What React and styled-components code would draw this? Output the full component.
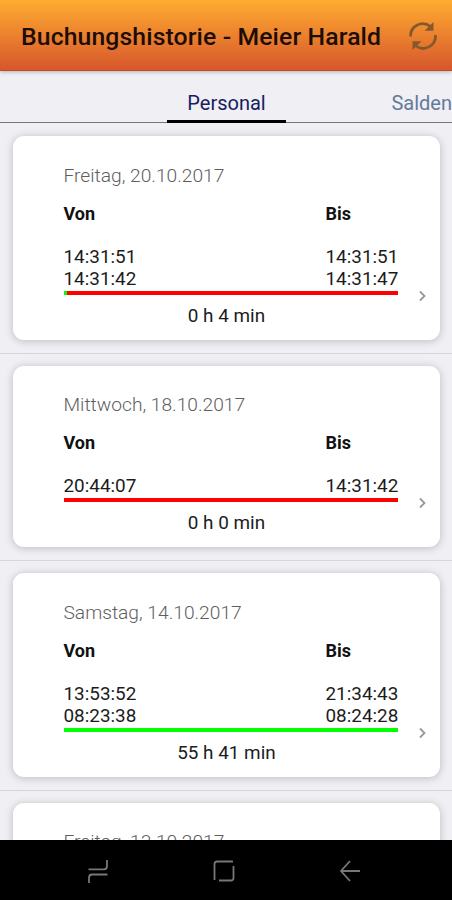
import React from "react";
import { styled, createGlobalStyle } from "styled-components";

const GlobalStyle = createGlobalStyle`
  * {
    box-sizing: border-box;
  }
  body {
    margin: 0;
    background-color: #efeff4;
    font-family: Roboto, "Liberation Sans", sans-serif;
  }
`;
const Screen = styled.div`
  display: flex;
  flex-direction: column;
  width: 452px;
  height: 900px;
  overflow: hidden;
  background-color: #efeff4;
`;
const Header = styled.header`
  z-index: 1;
  display: flex;
  flex: none;
  align-items: center;
  justify-content: space-between;
  height: 71px;
  padding: 2px 14px 0 21px;
  background: linear-gradient(#ffac30, #d7572c);
  border-bottom: 1px solid #c94a1c;
  box-shadow: 0 1px 4px rgba(0, 0, 0, 0.25);
`;
const Title = styled.h1`
  margin: 0;
  padding-top: 1px;
  font-size: 24.75px;
  font-weight: 500;
  letter-spacing: 0.12px;
  color: #1c0d06;
  white-space: nowrap;
`;
const Tabs = styled.nav`
  display: grid;
  flex: none;
  grid-template-columns: 167px 119px 166px;
  height: 52px;
  border-bottom: 1px solid #77777b;
`;
const Tab = styled.div`
  display: flex;
  align-items: center;
  justify-content: ${(props) => (props.$active ? "center" : "flex-end")};
  height: 52px;
  padding-top: ${(props) => (props.$active ? "15px" : "12px")};
  font-size: 20px;
  color: ${(props) => (props.$active ? "#17205f" : "#667a9c")};
  border-bottom: ${(props) => (props.$active ? "3px solid #000" : "none")};
`;
const List = styled.main`
  flex: 1;
  min-height: 0;
  overflow: hidden;
  padding-top: 1px;
`;
const Row = styled.section`
  padding: 12px 12px 12.75px 13px;
  border-bottom: 1px solid #d5d5da;
`;
const Card = styled.article`
  display: grid;
  grid-template-columns: 1fr 42px;
  padding: 27.5px 0 12.5px 50.5px;
  background-color: #fff;
  border-radius: 11px;
  box-shadow: 0 1px 9px rgba(0, 0, 0, 0.22);
`;
const DateText = styled.div`
  height: 24px;
  line-height: 24px;
  font-size: 19.2px;
  font-weight: 300;
  color: #5e5e5e;
`;
const Columns = styled.div`
  display: grid;
  grid-template-columns: 262px auto;
  font-size: 18.9px;
  line-height: 22.5px;
  color: #1c1c1c;
  white-space: nowrap;
`;
const Label = styled.div`
  margin: 15px 0 21px;
  font-size: 18px;
  font-weight: 700;
  line-height: 22px;
  color: #111;
`;
const Bar = styled.div`
  display: flex;
  height: 4px;
  background-color: #f00;
`;
const Done = styled.div`
  background-color: #0f0;
`;
const Total = styled.div`
  padding-right: 9px;
  margin-top: 9px;
  line-height: 24px;
  font-size: 18.9px;
  text-align: center;
  color: #1c1c1c;
`;
const Chevron = styled.svg`
  align-self: end;
  margin: 0 0 26px 20px;
`;
const NavBar = styled.footer`
  display: grid;
  flex: none;
  grid-template-columns: repeat(3, 22px);
  gap: 104px;
  align-items: center;
  height: 60px;
  padding: 1px 0 0 87px;
  background-color: #000;
`;

const bookings = [
  {
    date: "Freitag, 20.10.2017",
    from: ["14:31:51", "14:31:42"],
    to: ["14:31:51", "14:31:47"],
    done: 1,
    total: "0 h 4 min",
  },
  {
    date: "Mittwoch, 18.10.2017",
    from: ["20:44:07"],
    to: ["14:31:42"],
    done: 0,
    total: "0 h 0 min",
  },
  {
    date: "Samstag, 14.10.2017",
    from: ["13:53:52", "08:23:38"],
    to: ["21:34:43", "08:24:28"],
    done: 100,
    total: "55 h 41 min",
  },
  { date: "Freitag, 13.10.2017" },
];

const Times = ({ label, times }) => (
  <div>
    <Label>{label}</Label>
    {times.map((time) => (
      <div key={time}>{time}</div>
    ))}
  </div>
);

const BookingCard = ({ item }) => (
  <Row>
    <Card>
      <div>
        <DateText>{item.date}</DateText>
        {item.total && (
          <>
            <Columns>
              <Times label="Von" times={item.from} />
              <Times label="Bis" times={item.to} />
            </Columns>
            <Bar>
              <Done style={{ width: `${item.done}%` }} />
            </Bar>
            <Total>{item.total}</Total>
          </>
        )}
      </div>
      {item.total && (
        <Chevron width="9" height="12" fill="none" stroke="#999" strokeWidth="1.8">
          <path d="M2 1.5 6.5 6 2 10.5" />
        </Chevron>
      )}
    </Card>
  </Row>
);

const RefreshIcon = () => (
  <svg width="30" height="30" viewBox="0 0 30 30" fill="none" stroke="#86592d" strokeWidth="2.8">
    <path d="M2.600 15.500A12.200 12.200 0 0 1 22.500 5.500" />
    <path d="M27.400 14A12.200 12.200 0 0 1 7.500 24.500" />
    <path d="M25.500 1V9.800H16.500Z" fill="#86592d" stroke="none" />
    <path d="M4.500 29V20.200H13.500Z" fill="#86592d" stroke="none" />
  </svg>
);

const App = () => {
  return (
    <>
      <GlobalStyle />
      <Screen>
        <Header>
          <Title>Buchungshistorie - Meier Harald</Title>
          <RefreshIcon />
        </Header>
        <Tabs>
          <span />
          <Tab $active>Personal</Tab>
          <Tab>Salden</Tab>
        </Tabs>
        <List>
          {bookings.map((item) => (
            <BookingCard key={item.date} item={item} />
          ))}
        </List>
        <NavBar>
          <svg width="22" height="26" fill="none" stroke="#777" strokeWidth="1.8">
            <path d="M1.500 11.300H17Q20 11.300 20 8V2M2 25V20Q2 16.500 5 16.500H20.500" />
          </svg>
          <svg width="22" height="22" fill="none" stroke="#777" strokeWidth="1.8">
            <path d="M1.500 20V4Q1.500 1.500 4 1.500H20M6 20.500H18Q20.500 20.500 20.500 18V6" />
          </svg>
          <svg width="22" height="22" fill="none" stroke="#777" strokeWidth="1.8">
            <path d="M11 1 2 11 11 21M2 11H21" />
          </svg>
        </NavBar>
      </Screen>
    </>
  );
};

export default App;
